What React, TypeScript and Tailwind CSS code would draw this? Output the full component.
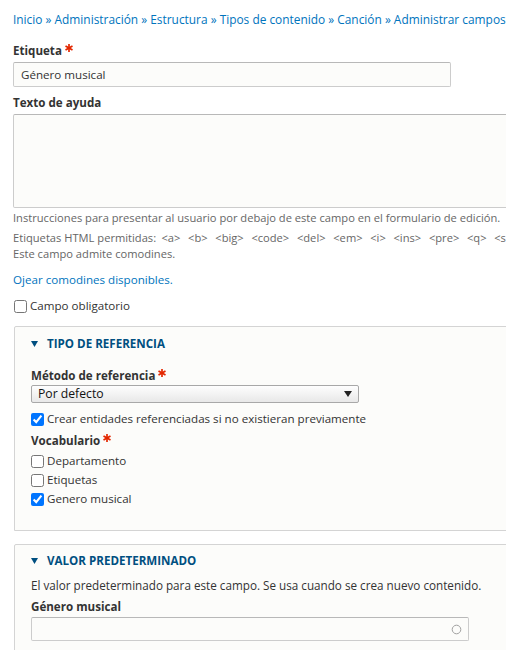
import React from "react";

const Asterisk = () => (
  <svg width="8" height="8" viewBox="0 0 8 8" className="inline-block ml-[3px] align-top mt-[2px]">
    <g stroke="#e32700" strokeWidth="1.7">
      <line x1="4" y1="0" x2="4" y2="8" />
      <line x1="0.5" y1="2" x2="7.5" y2="6" />
      <line x1="0.5" y1="6" x2="7.5" y2="2" />
    </g>
  </svg>
);

const Label = ({ children, required }: { children: React.ReactNode; required?: boolean }) => (
  <div className="font-bold text-[11.6px] leading-[18px] text-[#333] whitespace-nowrap">
    {children}
    {required && <Asterisk />}
  </div>
);

const Check = ({ label, checked }: { label: string; checked?: boolean }) => (
  <label className="flex items-center h-[18px] text-[11.6px] text-[#333] whitespace-nowrap">
    <input type="checkbox" defaultChecked={checked} className="m-0 w-[13px] h-[13px]" />
    <span className="ml-[3px]">{label}</span>
  </label>
);

const Summary = ({ children }: { children: React.ReactNode }) => (
  <div className="flex items-center h-[18px] text-[#004f80] font-bold text-[11.6px] uppercase whitespace-nowrap">
    <svg width="7" height="6" viewBox="0 0 7 6" className="mr-[9px]">
      <polygon points="0,0 7,0 3.5,6" fill="#004f80" />
    </svg>
    {children}
  </div>
);

const tags = ["a", "b", "big", "code", "del", "em", "i", "ins", "pre", "q", "small", "span", "strong", "sub", "sup", "tt", "ol", "ul", "li", "p", "br", "img"];

export default function App() {
  return (
    <div className="w-[506px] h-[650px] overflow-hidden bg-white font-['Open_Sans',sans-serif]">
      <div className="w-[640px] pl-[13px] pt-[10px]">
        <div className="text-[11.9px] leading-[18px] text-[#0074bd] whitespace-nowrap">
          Inicio » Administración » Estructura » Tipos de contenido » Canción » Administrar campos
        </div>

        <div className="mt-[14px]">
          <Label required>Etiqueta</Label>
        </div>
        <div className="mt-[2px] w-[438px] h-[25px] border border-[#ccc] border-t-[#b8b8b8] rounded-[2px] bg-[#fcfcfa] flex items-center pl-[7px] text-[11.6px] text-[#333]">
          Género musical
        </div>

        <div className="mt-[7px]">
          <Label>Texto de ayuda</Label>
        </div>
        <div className="mt-[2px] w-[560px] h-[94px] border border-[#ccc] border-t-[#b8b8b8] rounded-[2px] bg-[#fcfcfa]" />

        <div className="mt-[2px] text-[11.15px] leading-[16px] text-[#666] whitespace-nowrap">
          Instrucciones para presentar al usuario por debajo de este campo en el formulario de edición.
        </div>
        <div className="mt-[4px] text-[11.15px] leading-[16px] text-[#666] whitespace-nowrap">
          Etiquetas HTML permitidas:{" "}
          {tags.map((t, i) => (
            <React.Fragment key={t}>
              <code className="font-['Open_Sans',sans-serif] text-[11.15px] px-[2.4px]">{`<${t}>`}</code>
              {i < tags.length - 1 ? " " : ""}
            </React.Fragment>
          ))}
        </div>
        <div className="text-[11.15px] leading-[16px] text-[#666] whitespace-nowrap">
          Este campo admite comodines.
        </div>

        <div className="mt-[9px] text-[11.6px] leading-[18px] text-[#0074bd]">
          Ojear comodines disponibles.
        </div>

        <div className="mt-[8px] pl-px">
          <Check label="Campo obligatorio" />
        </div>

        <div className="ml-px mt-[11px] border border-[#d4d4d4] rounded-t-[2px] bg-[#fcfcfa] px-[16px] pt-[8px] pb-[22px]">
          <Summary>Tipo de referencia</Summary>
          <div className="mt-[14px]">
            <Label required>Método de referencia</Label>
          </div>
          <div className="w-[328px] h-[18px] border border-[#a8a8a8] rounded-[2px] bg-gradient-to-b from-[#fefefe] to-[#e8e8e8] flex items-center justify-between pl-[6px] pr-[6px] text-[12.2px] text-[#111]">
            <span>Por defecto</span>
            <svg width="8" height="6" viewBox="0 0 8 6">
              <polygon points="0,0 8,0 4,6" fill="#222" />
            </svg>
          </div>
          <div className="mt-[7px]">
            <Check label="Crear entidades referenciadas si no existieran previamente" checked />
          </div>
          <div className="mt-[4px]">
            <Label required>Vocabulario</Label>
          </div>
          <div className="mt-[2px]">
            <Check label="Departamento" />
          </div>
          <div className="mt-[1px]">
            <Check label="Etiquetas" />
          </div>
          <div className="mt-[1px]">
            <Check label="Genero musical" checked />
          </div>
        </div>

        <div className="ml-px mt-[13px] border border-[#d4d4d4] rounded-t-[2px] bg-[#fcfcfa] px-[16px] pt-[7px] pb-[30px]">
          <Summary>Valor predeterminado</Summary>
          <div className="mt-[6px] text-[11.7px] leading-[18px] text-[#333] whitespace-nowrap">
            El valor predeterminado para este campo. Se usa cuando se crea nuevo contenido.
          </div>
          <div className="mt-[4px]">
            <Label>Género musical</Label>
          </div>
          <div className="mt-[1px] w-[438px] h-[24px] border border-[#ccc] border-t-[#b8b8b8] rounded-[2px] bg-[#fcfcfa] flex items-center justify-end pr-[6px]">
            <svg width="11" height="11" viewBox="0 0 11 11">
              <circle cx="5.5" cy="5.5" r="4.3" fill="none" stroke="#a0a0a0" strokeWidth="1" />
            </svg>
          </div>
        </div>
      </div>
    </div>
  );
}
